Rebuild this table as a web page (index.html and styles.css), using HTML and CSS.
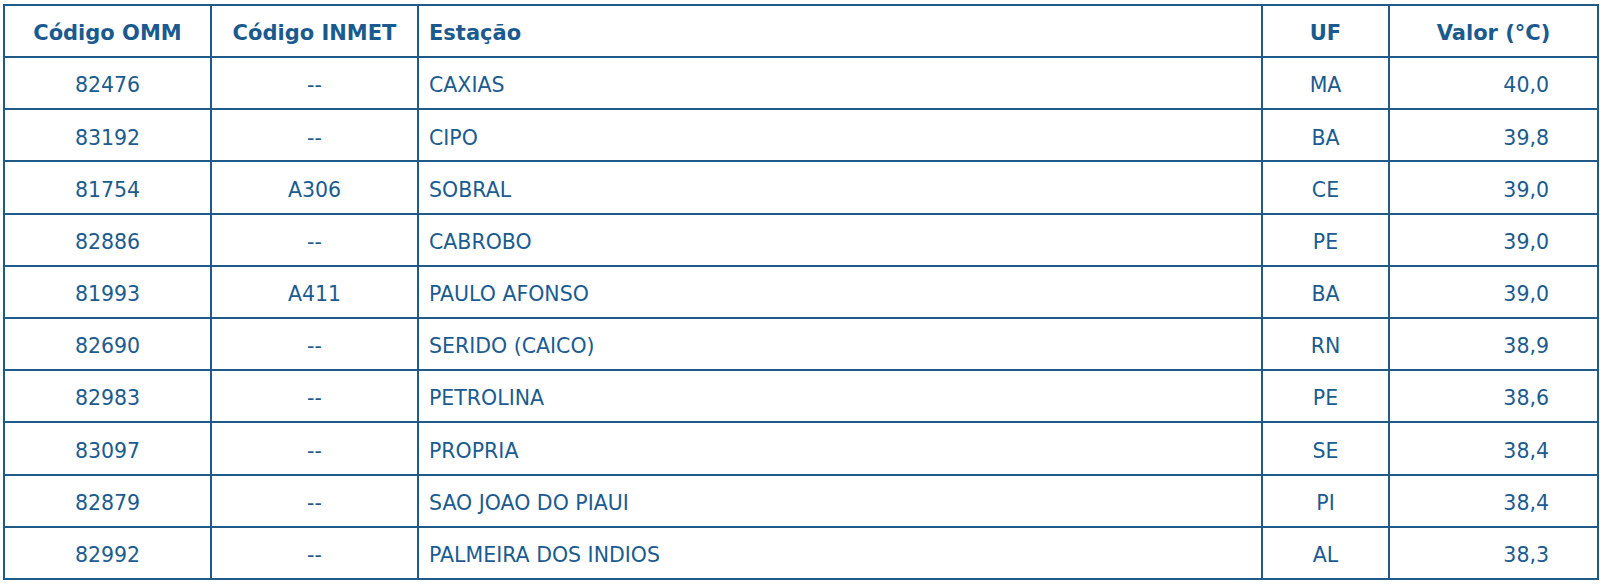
FILE: index.html
```html
<!DOCTYPE html>
<html lang="pt">
<head>
<meta charset="utf-8">
<link rel="stylesheet" href="styles.css">
</head>
<body>
<table class="data">
  <colgroup>
    <col class="c-omm">
    <col class="c-inmet">
    <col class="c-est">
    <col class="c-uf">
    <col class="c-val">
  </colgroup>
  <thead>
    <tr>
      <th class="center">Código OMM</th>
      <th class="center">Código INMET</th>
      <th class="left">Estação</th>
      <th class="center">UF</th>
      <th class="center">Valor (°C)</th>
    </tr>
  </thead>
  <tbody>
    <tr><td class="center">82476</td><td class="center">--</td><td class="left">CAXIAS</td><td class="center">MA</td><td class="num">40,0</td></tr>
    <tr><td class="center">83192</td><td class="center">--</td><td class="left">CIPO</td><td class="center">BA</td><td class="num">39,8</td></tr>
    <tr><td class="center">81754</td><td class="center">A306</td><td class="left">SOBRAL</td><td class="center">CE</td><td class="num">39,0</td></tr>
    <tr><td class="center">82886</td><td class="center">--</td><td class="left">CABROBO</td><td class="center">PE</td><td class="num">39,0</td></tr>
    <tr><td class="center">81993</td><td class="center">A411</td><td class="left">PAULO AFONSO</td><td class="center">BA</td><td class="num">39,0</td></tr>
    <tr><td class="center">82690</td><td class="center">--</td><td class="left">SERIDO (CAICO)</td><td class="center">RN</td><td class="num">38,9</td></tr>
    <tr><td class="center">82983</td><td class="center">--</td><td class="left">PETROLINA</td><td class="center">PE</td><td class="num">38,6</td></tr>
    <tr><td class="center">83097</td><td class="center">--</td><td class="left">PROPRIA</td><td class="center">SE</td><td class="num">38,4</td></tr>
    <tr><td class="center">82879</td><td class="center">--</td><td class="left">SAO JOAO DO PIAUI</td><td class="center">PI</td><td class="num">38,4</td></tr>
    <tr><td class="center">82992</td><td class="center">--</td><td class="left">PALMEIRA DOS INDIOS</td><td class="center">AL</td><td class="num">38,3</td></tr>
  </tbody>
</table>
</body>
</html>
```
FILE: styles.css
```css
html, body {
  margin: 0;
  background: #ffffff;
}
body {
  padding: 4px 4px 0 3px;
  font-family: "DejaVu Sans", Verdana, sans-serif;
  color: #1b5b90;
}
.data {
  border-collapse: collapse;
  table-layout: fixed;
  width: 1594px;
  border: 2px solid #1f5a88;
  font-size: 20.5px;
}
.c-omm { width: 207px; }
.c-inmet { width: 207px; }
.c-est { width: 844px; }
.c-uf { width: 127px; }
.c-val { width: 209px; }
.data th,
.data td {
  border: 2px solid #1f5a88;
  height: 45.2px;
  padding: 5px 10px 0;
  vertical-align: middle;
  line-height: 1;
}
.data th {
  font-weight: bold;
  font-size: 21px;
  color: #1a5a8e;
  height: 45px;
}
.data td {
  font-weight: normal;
}
.center { text-align: center; }
.left { text-align: left; }
.num { text-align: right; padding-right: 48px !important; }
```
